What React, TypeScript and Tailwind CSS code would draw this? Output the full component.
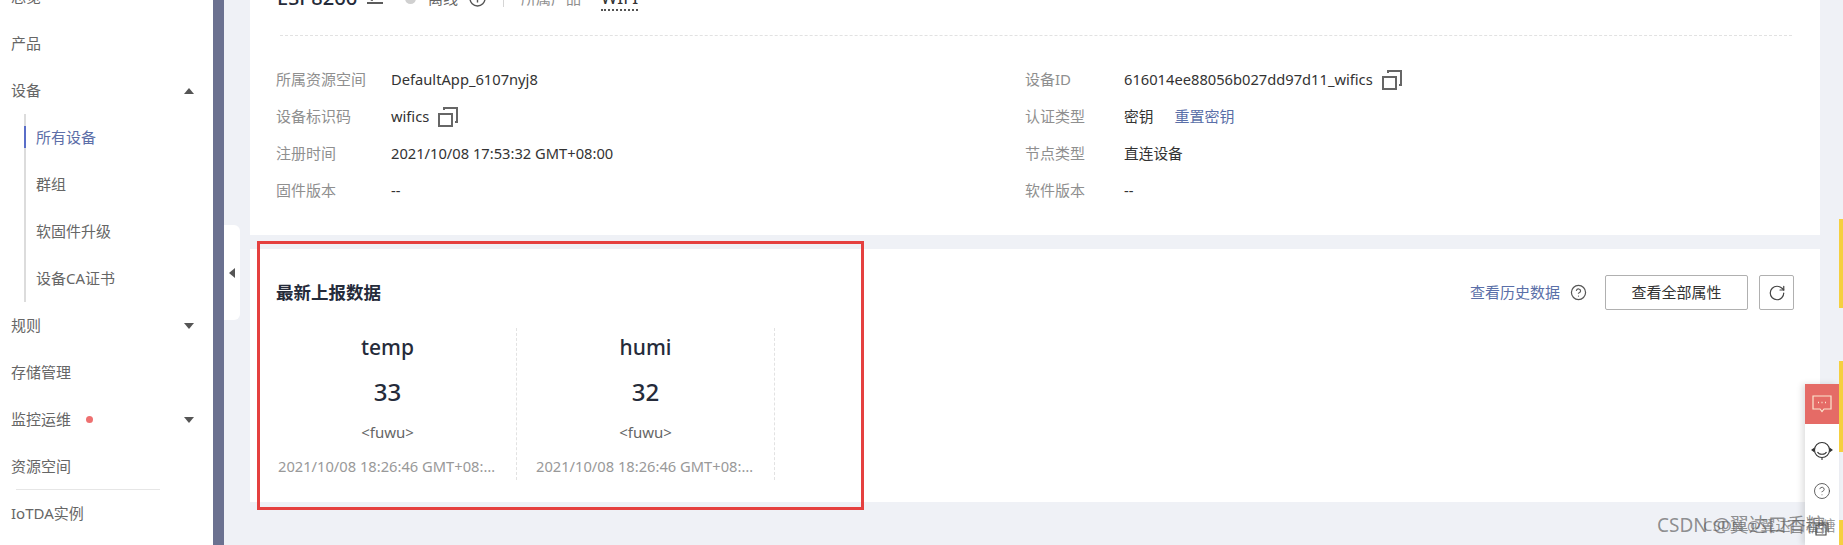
import React from 'react';
import { CircleHelp, RotateCw } from 'lucide-react';

const FONT = "font-['Noto_Sans','Noto_Sans_CJK_SC',sans-serif]";

const CopyIcon = () => (
  <svg width="20" height="20" viewBox="0 0 20 20" fill="none" stroke="#666" strokeWidth="2" className="ml-[9px] shrink-0">
    <rect x="1" y="7" width="13" height="12" />
    <path d="M6 3 V1 H19 V15 H17" />
  </svg>
);

const Caret = ({ up }: { up?: boolean }) => (
  <svg width="10" height="6" viewBox="0 0 10 6" className="ml-auto mr-[19px]" fill="#555">
    <path d={up ? 'M5 0 L10 6 H0 Z' : 'M0 0 H10 L5 6 Z'} />
  </svg>
);

const NavItem = ({ label, caret, dot }: { label: string; caret?: 'up' | 'down'; dot?: boolean }) => (
  <div className="flex h-[47px] items-center pl-[11px] text-[15px] text-[#666]">
    <span>{label}</span>
    {dot && <span className="ml-[15px] h-[7px] w-[7px] rounded-full bg-[#ee7070]" />}
    {caret && <Caret up={caret === 'up'} />}
  </div>
);

const SubItem = ({ label, active }: { label: string; active?: boolean }) => (
  <div className="relative flex h-[47px] items-center pl-[10px] text-[15px]">
    {active && <span className="absolute -left-[2px] top-[12px] h-[22px] w-[2px] bg-[#5a6ec8]" />}
    <span className={active ? 'text-[#5c6ea8]' : 'text-[#666]'}>{label}</span>
  </div>
);

const Sidebar = () => (
  <aside className="-mt-[27px] w-[213px] shrink-0 bg-white">
    <NavItem label="总览" />
    <NavItem label="产品" />
    <NavItem label="设备" caret="up" />
    <div className="my-[12px] ml-[24px] border-l-2 border-[#dcdcdc]">
      <div className="-my-[12px]">
        <SubItem label="所有设备" active />
        <SubItem label="群组" />
        <SubItem label="软固件升级" />
        <SubItem label="设备CA证书" />
      </div>
    </div>
    <NavItem label="规则" caret="down" />
    <NavItem label="存储管理" />
    <NavItem label="监控运维" caret="down" dot />
    <NavItem label="资源空间" />
    <div className="ml-[16px] mt-[-1px] mr-[53px] border-t border-[#e6e6e6]" />
    <NavItem label="IoTDA实例" />
  </aside>
);

const InfoRow = ({ label, value, left, children }: { label: string; value?: string; left?: boolean; children?: React.ReactNode }) => (
  <div className="flex h-[37px] items-center text-[15px]">
    <span className={`shrink-0 text-[#8f8f8f] ${left ? 'w-[115px]' : 'w-[99px]'}`}>{label}</span>
    <span className="text-[14.7px] text-[#333]">{value}</span>
    {children}
  </div>
);

const DeviceHeader = () => (
  <div className="flex h-[40px] items-center pl-[27px]">
    <span className="w-[77px] whitespace-nowrap text-[20px] font-medium text-[#252b3a]">ESP8266</span>
    <svg width="18" height="18" viewBox="0 0 18 18" fill="none" stroke="#333" strokeWidth="1.6" className="ml-[12px] mt-[-4px]">
      <path d="M1 16 H17" />
      <path d="M4 12 L13 3 L15 5 L6 13 Z" />
    </svg>
    <span className="ml-[21px] h-[11px] w-[11px] rounded-full bg-[#d0d0d0]" />
    <span className="ml-[12px] text-[15px] text-[#666]">离线</span>
    <svg width="17" height="17" viewBox="0 0 17 17" fill="none" stroke="#555" strokeWidth="1.4" className="ml-[11px]">
      <circle cx="8.5" cy="8.5" r="7.5" />
      <path d="M8.5 7.5 V12.5 M8.5 4 V5.5" />
    </svg>
    <span className="ml-[17px] h-[18px] w-px bg-[#d5d5d5]" />
    <span className="ml-[17px] text-[15px] text-[#8f8f8f]">所属产品</span>
    <span className="ml-[20px] border-b-2 border-dotted border-[#555] text-[17.5px] leading-[24px] text-[#333]">WIFI</span>
  </div>
);

const DeviceInfo = () => (
  <section className="bg-white pb-[26px]">
    <DeviceHeader />
    <div className="ml-[30px] mr-[28px] mt-[17px] border-t border-dashed border-[#e2e2e2]" />
    <div className="ml-[26px] mt-[25px] grid grid-cols-[749px_1fr]">
      <div>
        <InfoRow left label="所属资源空间" value="DefaultApp_6107nyj8" />
        <InfoRow left label="设备标识码" value="wifics"><CopyIcon /></InfoRow>
        <InfoRow left label="注册时间" value="2021/10/08 17:53:32 GMT+08:00" />
        <InfoRow left label="固件版本" value="--" />
      </div>
      <div>
        <InfoRow label="设备ID" value="616014ee88056b027dd97d11_wifics"><CopyIcon /></InfoRow>
        <InfoRow label="认证类型" value="密钥"><span className="ml-[21px] text-[#5a6fa8]">重置密钥</span></InfoRow>
        <InfoRow label="节点类型" value="直连设备" />
        <InfoRow label="软件版本" value="--" />
      </div>
    </div>
  </section>
);

const DataCard = ({ name, value }: { name: string; value: string }) => (
  <div className="flex h-[152px] w-[258px] flex-col items-center border-r border-dashed border-[#e2e2e2]">
    <div className="h-[38px] text-[21px] font-medium leading-[38px] text-[#252b3a]">{name}</div>
    <div className="mt-[6px] h-[40px] text-[24px] font-medium leading-[40px] text-[#252b3a]">{value}</div>
    <div className="mt-[8px] h-[24px] text-[15px] leading-[24px] text-[#666]">{'<fuwu>'}</div>
    <div className="mt-[10px] h-[24px] w-[219px] truncate text-[14.7px] leading-[24px] text-[#999]">2021/10/08 18:26:46 GMT+08:00</div>
  </div>
);

const LatestData = () => (
  <section className="mt-[14px] h-[253px] bg-white pt-[26px]">
    <div className="flex h-[35px] items-center pl-[26px] pr-[26px]">
      <h2 className="text-[17.5px] font-bold text-[#252b3a]">最新上报数据</h2>
      <span className="ml-auto text-[15px] text-[#5a6fa8]">查看历史数据</span>
      <CircleHelp size={17} color="#555" strokeWidth={1.7} className="ml-[10px]" />
      <button className="ml-[18px] h-[35px] w-[143px] rounded-[2px] border border-[#b0b0b0] text-[15px] text-[#333]">查看全部属性</button>
      <button className="ml-[11px] flex h-[35px] w-[35px] items-center justify-center rounded-[2px] border border-[#b0b0b0]">
        <RotateCw size={18} color="#444" strokeWidth={1.6} />
      </button>
    </div>
    <div className="ml-[9px] mt-[18px] flex">
      <DataCard name="temp" value="33" />
      <DataCard name="humi" value="32" />
    </div>
  </section>
);

const FloatPanel = () => (
  <div className="absolute bottom-0 left-[1805px] top-[384px] flex w-[34px] flex-col items-center bg-white shadow-[-3px_0_6px_rgba(0,0,0,0.12)]">
    <div className="flex h-[40px] w-full items-center justify-center bg-[#e56b66]">
      <svg width="20" height="18" viewBox="0 0 20 18" fill="none" stroke="#fbe7d0" strokeWidth="1.2">
        <path d="M1 1 H19 V14 H12 L10 16.5 L8 14 H1 Z" />
        <path d="M6 7.5 H7 M9.5 7.5 H10.5 M13 7.5 H14" strokeWidth="1.6" />
      </svg>
    </div>
    <svg width="22" height="20" viewBox="0 0 22 20" fill="none" stroke="#333" strokeWidth="1.1" className="mt-[17px]">
      <circle cx="11" cy="9" r="7.5" />
      <path d="M6.5 11 C8 14 14 14 15.5 11" />
      <path d="M1 9 L3 7.5 V10.5 Z M21 9 L19 7.5 V10.5 Z" fill="#333" />
      <path d="M11 17 V19" />
    </svg>
    <CircleHelp size={18} color="#444" strokeWidth={1.1} className="mt-[21px]" />
    <svg width="14" height="14" viewBox="0 0 14 14" fill="none" stroke="#444" strokeWidth="1.1" className="mt-[22px]">
      <path d="M1 13 V3 H11 V13 Z M4 3 V1 H13 V10" />
    </svg>
  </div>
);

const App: React.FC = () => {
  return (
    <div className={`relative flex h-[545px] w-[1843px] overflow-hidden bg-[#eff1f6] ${FONT}`}>
      <Sidebar />
      <div className="w-[11px] shrink-0 bg-[#6b7190]" />
      <main className="-mt-[22px] ml-[26px] w-[1570px] shrink-0">
        <DeviceInfo />
        <LatestData />
      </main>

      {/* collapse tab */}
      <div className="absolute left-[224px] top-[225px] flex h-[95px] w-[16px] items-center justify-center rounded-r-[6px] bg-white">
        <svg width="6" height="10" viewBox="0 0 6 10" fill="#555"><path d="M6 0 V10 L0 5 Z" /></svg>
      </div>

      {/* red annotation */}
      <div className="absolute left-[257px] top-[241px] h-[269px] w-[607px] border-[3px] border-[#e5403f]" />

      <FloatPanel />

      {/* yellow edge bars */}
      <div className="absolute left-[1839px] top-[219px] h-[89px] w-[4px] bg-[#f5d040]" />
      <div className="absolute left-[1839px] top-[361px] h-[91px] w-[4px] bg-[#f5d040]" />
      <div className="absolute left-[1839px] top-[520px] h-[25px] w-[4px] bg-[#f5d040]" />

      {/* watermark */}
      <div className="absolute left-[1657px] top-[511px] whitespace-nowrap text-[19px] leading-[28px] text-[#555]/65">CSDN @翼达口香糖</div>
      <div className="absolute left-[1703px] top-[513px] whitespace-nowrap text-[15px] leading-[24px] text-[#555]/60">CSDN @翼达口香糖</div>
    </div>
  );
};

export default App;
